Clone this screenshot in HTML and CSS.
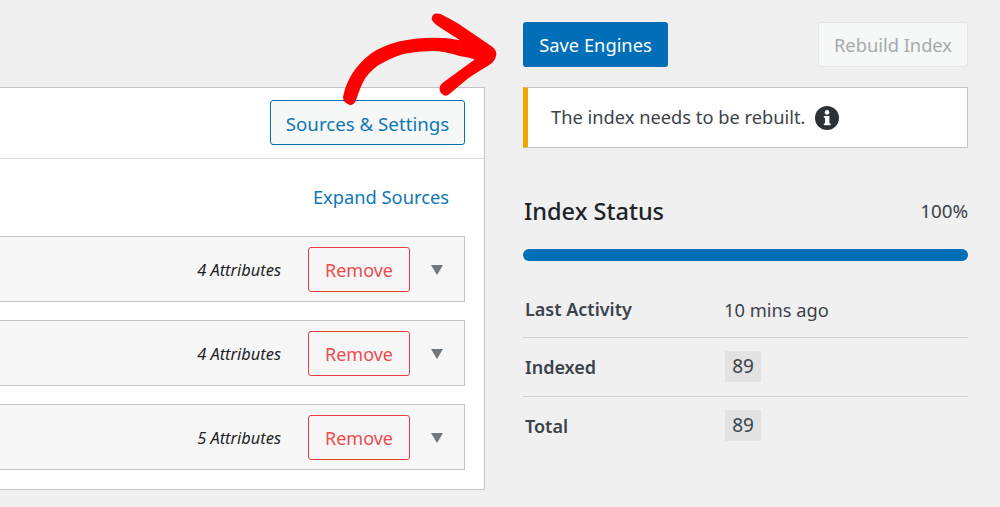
FILE: index.html
```html
<!DOCTYPE html>
<html lang="en">
<head>
<meta charset="utf-8">
<title>Engines</title>
<link rel="stylesheet" href="styles.css">
</head>
<body>
<div class="page">
  <section class="panel">
    <header class="panel-head">
      <a class="btn btn-outline">Sources &amp; Settings</a>
    </header>
    <div class="panel-body">
      <div class="expand"><a>Expand Sources</a></div>
      <div class="source">
        <em>4 Attributes</em>
        <a class="btn-remove">Remove</a>
        <span class="caret"></span>
      </div>
      <div class="source">
        <em>4 Attributes</em>
        <a class="btn-remove">Remove</a>
        <span class="caret"></span>
      </div>
      <div class="source">
        <em>5 Attributes</em>
        <a class="btn-remove">Remove</a>
        <span class="caret"></span>
      </div>
    </div>
  </section>
  <aside class="side">
    <div class="actions">
      <a class="btn btn-primary">Save Engines</a>
      <a class="btn btn-disabled">Rebuild Index</a>
    </div>
    <div class="notice">
      <span>The index needs to be rebuilt.</span>
      <svg class="info" viewBox="0 0 24 24" aria-hidden="true">
        <circle cx="12" cy="12" r="12" fill="#2c3338"/>
        <rect x="10" y="10" width="4.4" height="9" fill="#fff"/>
        <rect x="8.8" y="10" width="3" height="1.8" fill="#fff"/>
        <rect x="8.8" y="17.4" width="6.8" height="1.8" fill="#fff"/>
        <circle cx="12" cy="6.4" r="2.3" fill="#fff"/>
      </svg>
    </div>
    <div class="status-head">
      <h2>Index Status</h2>
      <span>100%</span>
    </div>
    <div class="progress"></div>
    <dl class="stats">
      <div class="stat"><dt>Last Activity</dt><dd>10 mins ago</dd></div>
      <div class="stat"><dt>Indexed</dt><dd><code>89</code></dd></div>
      <div class="stat"><dt>Total</dt><dd><code>89</code></dd></div>
    </dl>
  </aside>
  <svg class="arrow" viewBox="0 0 1000 507" aria-hidden="true">
    <path fill="#fe0000" stroke="#fe0000" stroke-width="2" stroke-linejoin="round" d="M344 97C347 82 356 66 372 54C392 41 420 38 443 39C452 39.5 460 41 466 43L438 25C434 22 432 19 433 17C434 14 437 14 440 15C448 19 456 23 463 28L491 47C495 50 496 53 495 56C494 60 492 62 489 64C481 69 474 73 467 78L449 93C446 96 443 95 441 91C440 88 441 85 444 83L477 59C471 57 466 56 460 55C450 52 442 50 433 50C423 50 413 51 403 53C393 56 385 60 377 65C370 70 365 76 362 82C359 88 357 94 355 100C354 103 352 104 350 104C347 103 344 101 344 97Z"/>
  </svg>
</div>
</body>
</html>
```
FILE: styles.css
```css
* { box-sizing: border-box; }
html, body { margin: 0; height: 100%; }
body {
  background: #f0f0f1;
  color: #3c434a;
  font-family: "Noto Sans", "Open Sans", sans-serif;
  font-size: 18.3px;
  overflow: hidden;
}
.page {
  position: relative;
  display: flex;
  align-items: flex-start;
  gap: 38px;
  width: 1000px;
  height: 507px;
  padding-top: 22px;
}
.panel {
  width: 485px;
  height: 403px;
  margin-top: 65px;
  background: #fff;
  border: 1px solid #c3c4c7;
  border-left: 0;
  flex: none;
}
.panel-head {
  display: flex;
  justify-content: flex-end;
  height: 71px;
  padding: 12px 19px 0 0;
  border-bottom: 1px solid #dcdcde;
}
.btn {
  display: flex;
  align-items: center;
  justify-content: center;
  height: 45px;
  border-radius: 3px;
  border: 1px solid transparent;
  font-size: 18.3px;
  white-space: nowrap;
}
.btn-outline {
  width: 195px;
  padding-top: 2px;
  background: #f6f7f7;
  border-color: #0071b8;
  color: #0f77b5;
  font-size: 18.7px;
}
.panel-body { padding: 0 19px 0 0; }
.expand {
  display: flex;
  justify-content: flex-end;
  align-items: center;
  height: 77px;
  padding: 0 16px 2px 0;
  color: #0f77b5;
}
.source {
  display: flex;
  align-items: center;
  justify-content: flex-end;
  height: 66px;
  margin-bottom: 18px;
  padding-right: 21px;
  background: #f7f7f7;
  border: 1px solid #c3c4c7;
  border-left: 0;
}
.source em { font-size: 16.4px; color: #1d2327; padding-top: 1px; }
.btn-remove {
  display: flex;
  align-items: center;
  justify-content: center;
  width: 102px;
  height: 45px;
  margin: 0 21px 0 27px;
  padding-top: 2px;
  border: 1px solid #ee3b3e;
  border-radius: 3px;
  color: #f04a4d;
  font-size: 18px;
}
.caret {
  width: 0;
  height: 0;
  margin-top: 2px;
  border-left: 6.5px solid transparent;
  border-right: 6.5px solid transparent;
  border-top: 10px solid #72777c;
}
.side { width: 445px; flex: none; }
.actions { display: flex; justify-content: space-between; }
.btn-primary {
  width: 145px;
  background: #006fb7;
  color: #fff;
}
.btn-disabled {
  width: 150px;
  background: #f6f7f7;
  border-color: #e4e5e6;
  color: #a7aaad;
}
.notice {
  display: flex;
  align-items: center;
  gap: 9px;
  height: 61px;
  margin-top: 20px;
  padding: 0 0 2px 23px;
  background: #fff;
  border: 1px solid #c3c4c7;
  border-left: 5px solid #f0a800;
}
.info { width: 24px; height: 24px; margin-top: 2px; }
.status-head {
  display: flex;
  justify-content: space-between;
  align-items: center;
  margin-top: 46px;
  height: 34px;
  padding-left: 1px;
}
.status-head h2 {
  margin: 0;
  font-size: 23.5px;
  font-weight: 500;
  color: #1d2327;
}
.status-head span { font-size: 18.8px; }
.progress {
  height: 12px;
  margin-top: 21px;
  background: #006fb7;
  border-radius: 6px;
}
.stats { margin: 18px 0 0; }
.stat {
  display: flex;
  align-items: center;
  height: 59px;
  padding-left: 2px;
  border-bottom: 1px solid #d0d1d3;
}
.stat:first-child { padding-top: 2px; }
.stat:last-child { border-bottom: 0; }
.stat:last-child dt { margin-bottom: 2px; }
.stat dt { width: 199px; font-size: 18px; font-weight: 600; }
.stat dd { margin: 0; }
.stat code {
  display: inline-block;
  width: 36px;
  height: 31px;
  margin: 0 0 2px 1px;
  line-height: 31px;
  text-align: center;
  background: #e2e2e3;
  font-family: inherit;
  font-size: 19px;
}
.arrow {
  position: absolute;
  left: 0;
  top: 0;
  width: 1000px;
  height: 507px;
  pointer-events: none;
}
```
